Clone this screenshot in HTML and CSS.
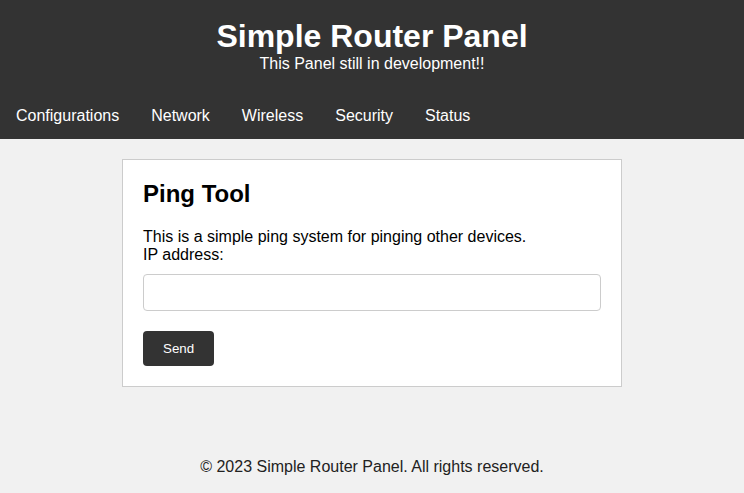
FILE: index.html
```html
<!DOCTYPE html>
<html lang="en">
<head>
<meta charset="utf-8">
<title>Simple Router Panel</title>
<link rel="stylesheet" href="styles.css">
</head>
<body>
<header class="site-header">
  <h1 class="site-title">Simple Router Panel</h1>
  <p class="site-subtitle">This Panel still in development!!</p>
</header>
<nav class="site-nav">
  <a href="#" class="nav-link">Configurations</a>
  <a href="#" class="nav-link">Network</a>
  <a href="#" class="nav-link">Wireless</a>
  <a href="#" class="nav-link">Security</a>
  <a href="#" class="nav-link">Status</a>
</nav>
<main class="content">
  <section class="card">
    <h2 class="card-title">Ping Tool</h2>
    <form class="ping-form">
      <label class="ping-label" for="ip">This is a simple ping system for pinging other devices.<br>IP address:</label>
      <input class="ping-input" type="text" id="ip" name="ip">
      <button class="ping-button" type="button">Send</button>
    </form>
  </section>
</main>
<footer class="site-footer">© 2023 Simple Router Panel. All rights reserved.</footer>
</body>
</html>
```

FILE: styles.css
```css
* { box-sizing: border-box; }
html, body { margin: 0; padding: 0; }
body {
  font-family: "Liberation Sans", Arial, sans-serif;
  font-size: 16px;
  background: #f1f1f1;
  color: #000;
  min-height: 100vh;
  display: flex;
  flex-direction: column;
}
.site-header {
  background: #333;
  color: #fff;
  text-align: center;
  padding: 18px 0 20px;
}
.site-title {
  margin: 0;
  font-size: 32px;
  font-weight: bold;
}
.site-subtitle {
  margin: 0;
  font-size: 16px;
}
.site-nav {
  background: #333;
  display: flex;
}
.nav-link {
  color: #fff;
  text-decoration: none;
  padding: 14px 16px;
  line-height: 18px;
}
.content {
  display: flex;
  justify-content: center;
  padding-top: 20px;
}
.card {
  width: 500px;
  background: #fff;
  border: 1px solid #ccc;
  padding: 20px;
}
.card-title {
  margin: 0 0 20px;
  font-size: 24px;
  font-weight: bold;
}
.ping-form {
  display: flex;
  flex-direction: column;
  align-items: flex-start;
}
.ping-label {
  line-height: 18px;
}
.ping-input {
  width: 100%;
  margin: 10px 0 20px;
  padding: 10px;
  border: 1px solid #ccc;
  border-radius: 4px;
  font-family: "Liberation Sans", Arial, sans-serif;
  font-size: 13.333px;
  height: 37px;
}
.ping-button {
  background: #333;
  color: #fff;
  border: none;
  border-radius: 4px;
  padding: 10px 20px;
  font-family: "Liberation Sans", Arial, sans-serif;
  font-size: 13.333px;
  height: 35px;
}
.site-footer {
  margin-top: auto;
  text-align: center;
  padding: 19px 0 17px;
  line-height: 18px;
  color: #222;
}
```
